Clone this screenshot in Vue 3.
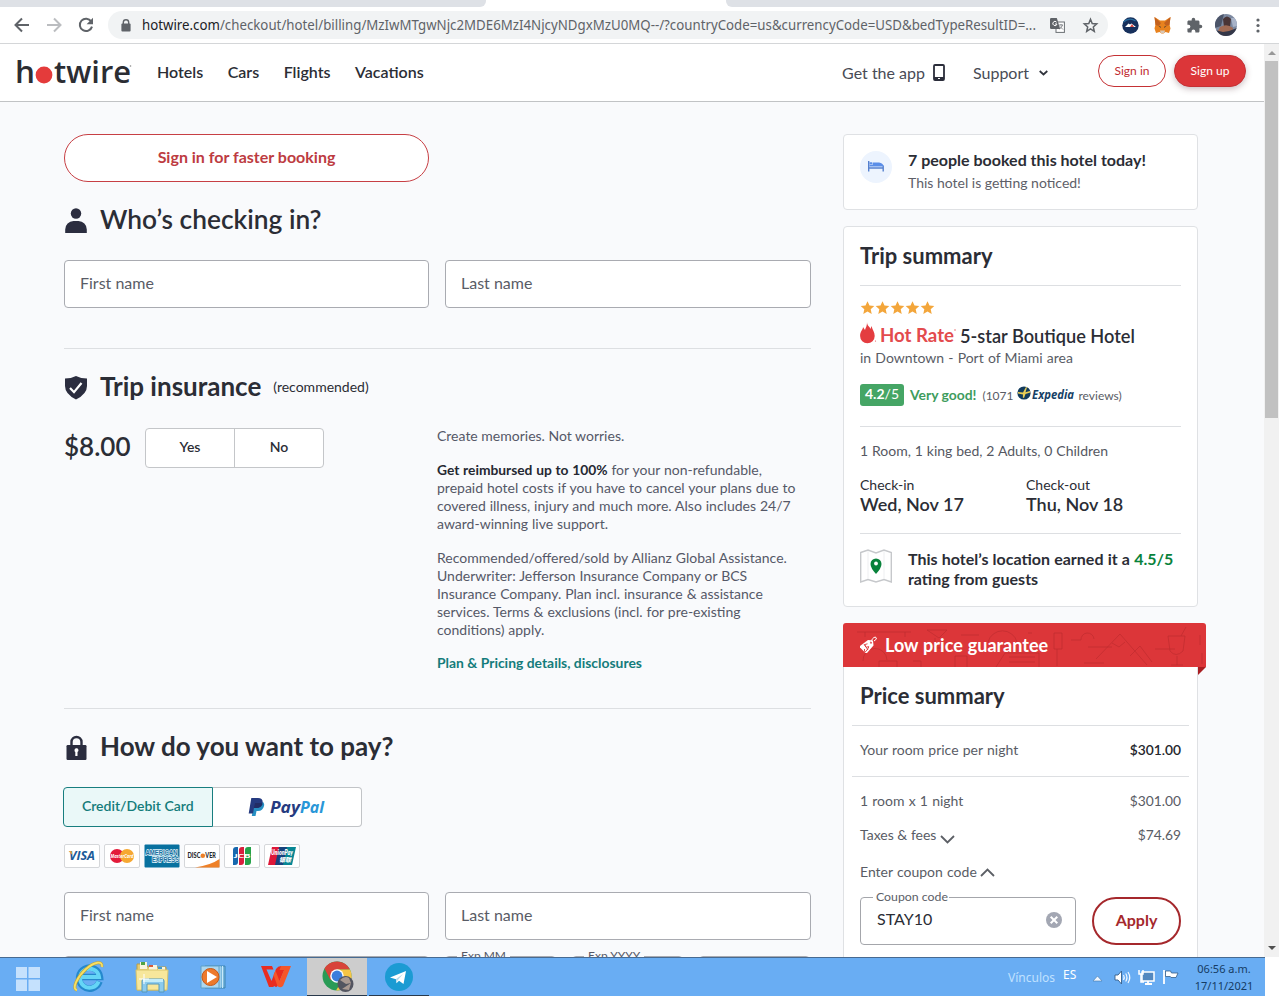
<script setup>
import { ref } from 'vue'

const links = ['Hotels', 'Cars', 'Flights', 'Vacations']
const insurance = ref('')
const payment = ref('card')
const coupon = ref('STAY10')
</script>

<template>
    <div class="screen">
        <div class="tabstrip">
            <div class="tabs_left"></div>
            <div class="tabs_right"></div>
        </div>

        <div class="toolbar">
            <div class="nav_icons">
                <svg width="16" height="16" viewBox="0 0 16 16" fill="none" stroke="#5f6368" stroke-width="2"><path d="M15 8H2M8 1.5 1.5 8 8 14.5" /></svg>
                <svg width="16" height="16" viewBox="0 0 16 16" fill="none" stroke="#bbbdc0" stroke-width="2"><path d="M1 8h13M8 1.5 14.5 8 8 14.5" /></svg>
                <svg width="16" height="16" viewBox="0 0 16 16" fill="none" stroke="#5f6368" stroke-width="2"><path d="M13.2 4.4A6.2 6.2 0 1 0 14 9.6" /><path d="M15 .8v6.4H8.6z" fill="#5f6368" stroke="none" /></svg>
            </div>
            <div class="omnibox">
                <svg class="lock" width="10" height="13" viewBox="0 0 10 13"><path d="M2.3 5V3.4a2.7 2.7 0 0 1 5.4 0V5" fill="none" stroke="#5f6368" stroke-width="1.4" /><rect x="0.4" y="4.6" width="9.2" height="8" rx="1" fill="#5f6368" /></svg>
                <div class="url">
                    <svg width="896" height="22"><text x="0" y="16" textLength="894" lengthAdjust="spacingAndGlyphs" fill="#5f6368"><tspan fill="#202124">hotwire.com</tspan>/checkout/hotel/billing/MzIwMTgwNjc2MDE6MzI4NjcyNDgxMzU0MQ--/?countryCode=us&amp;currencyCode=USD&amp;bedTypeResultID=...</text></svg>
                </div>
                <svg width="15" height="15" viewBox="0 0 15 15"><rect x="6" y="4" width="8.4" height="10.4" fill="#fff" stroke="#6b6f73" /><path d="M0 1.2Q0 0 1.2 0h5.6l3.4 11H1.2Q0 11 0 9.800z" fill="#5f6368" /><path d="M6.600 4.200A2.100 2.100 0 1 0 7 6H5" fill="none" stroke="#fff" stroke-width="1" /><path d="M9 7h4M11 6v1M12.500 7q-.7 2.500-3 4M10 8.500l3 3" fill="none" stroke="#6b6f73" stroke-width=".8" /></svg>
                <svg class="star" width="15" height="15" viewBox="0 0 15 15"><path d="M7.500 1.300l1.700 4.200 4.500.4-3.400 3 1 4.400-3.800-2.400-3.800 2.400 1-4.400-3.400-3 4.500-.4z" fill="none" stroke="#5f6368" stroke-width="1.500" /></svg>
            </div>
            <div class="extensions">
                <svg width="17" height="17" viewBox="0 0 17 17"><circle cx="8.500" cy="8.500" r="8.200" fill="#17305c" /><path d="M1.500 5q6-5 12-1" stroke="#286c9d" stroke-width="1.200" fill="none" /><path d="M3 10 6.500 6.500l1.500 1 1.500-1L14 10z" fill="#fff" /><path d="M8 10l2-3 2 3z" fill="#d84b43" /></svg>
                <svg width="17" height="17" viewBox="0 0 17 17"><path d="M.5 0 6 3.500h5L16.500 0l-1 7.500 1 4-1.500 4.500-3.500-1-2 1.500h-2l-2-1.500L2 16 .5 11.500l1-4z" fill="#e8821e" /><path d="M.5 0 7 6 5 9l-3.500-1zM16.500 0 10 6l2 3 3.500-1z" fill="#c3611e" /><path d="M6 13.500h5l-.7 2.500H6.700z" fill="#d8c7b6" /><path d="M4.500 9l2 .5.300 1.500zM12.500 9l-2 .5-.3 1.500z" fill="#333" /></svg>
                <svg width="17" height="17" viewBox="0 0 24 24"><path fill="#5f6368" d="M20.500 11H19V7c0-1.100-.9-2-2-2h-4V3.500a2.500 2.500 0 0 0-5 0V5H4c-1.100 0-2 .9-2 2v3.800h1.500a2.700 2.700 0 0 1 0 5.400H2V20c0 1.100.9 2 2 2h3.800v-1.500a2.700 2.700 0 0 1 5.400 0V22H17c1.100 0 2-.9 2-2v-4h1.500a2.500 2.500 0 0 0 0-5z" /></svg>
                <svg width="22" height="22" viewBox="0 0 22 22"><defs><clipPath id="face"><circle cx="11" cy="11" r="11" /></clipPath></defs><g clip-path="url(#face)"><rect width="22" height="22" fill="#7c89a0" /><path d="M0 0h9L6 12l-6 2z" fill="#4c5569" /><path d="M8 5q4-5 8 0l-1 8H9z" fill="#4a3536" /><path d="M5 13q7-4 13 1l-1 5-8 3-6-5z" fill="#a06b55" /><path d="M0 16l8 2 6-1 8-3v8H0z" fill="#343748" /><path d="M16 4h6v8l-4 1z" fill="#a8b3c8" /></g></svg>
                <svg class="menu" width="4" height="15" viewBox="0 0 4 15" fill="#5f6368"><circle cx="2" cy="2" r="1.600" /><circle cx="2" cy="7.500" r="1.600" /><circle cx="2" cy="13" r="1.600" /></svg>
            </div>
        </div>

        <div class="viewport">
            <div class="page">
                <header class="header">
                    <svg class="logo" width="116" height="34" viewBox="0 -3 116 34"><g font-family="Open Sans" font-weight="600" font-size="30" fill="#2b2d33"><text x="-1" y="25" textLength="20" lengthAdjust="spacingAndGlyphs">h</text><text x="38" y="25" textLength="77" lengthAdjust="spacingAndGlyphs">twire</text></g><circle cx="28" cy="17" r="8.400" fill="#e43b3b" /><circle cx="114.500" cy="8" r=".8" fill="#888" /></svg>
                    <nav class="links">
                        <a v-for="link in links" :key="link">{{ link }}</a>
                    </nav>
                    <div class="tools">
                        <span class="get_app">Get the app</span>
                        <svg width="12" height="17" viewBox="0 0 12 17"><rect x="1" y="1" width="10" height="15" rx="1" fill="#fff" stroke="#2b2d3a" stroke-width="1.800" /><path d="M1 13h10v3H1z" fill="#2b2d3a" /><path d="M5 14.500h2" stroke="#fff" /></svg>
                        <span class="support">Support</span>
                        <svg class="caret" width="9" height="6" viewBox="0 0 9 6"><path d="M.7 1l3.800 3.500L8.300 1" fill="none" stroke="#30333c" stroke-width="1.700" /></svg>
                        <button class="pill">Sign in</button>
                        <button class="pill filled">Sign up</button>
                    </div>
                </header>

                <div class="content">
                    <main class="main">
                        <button class="faster">Sign in for faster booking</button>
                        <h2 class="guest">
                            <svg width="24" height="26" viewBox="0 0 24 26" fill="#2b2d3f"><circle cx="12" cy="6.500" r="5.200" /><path d="M1.200 26v-3.500A8.500 8.500 0 0 1 9.500 14h5a8.500 8.500 0 0 1 8.300 8.500V26z" /></svg>
                            <span>Who’s checking in?</span>
                        </h2>
                        <div class="fields">
                            <div class="field">First name</div>
                            <div class="field">Last name</div>
                        </div>

                        <section class="insurance">
                            <h2>
                                <svg width="24" height="26" viewBox="0 0 24 26"><path d="M12 2q5 2.500 11 2.500V12q0 8-11 13.500Q1 20 1 12V4.500q6 0 11-2.500z" fill="#2b2d3f" /><path d="M6 14l4 4.200L17.500 9" fill="none" stroke="#fff" stroke-width="2.200" /></svg>
                                <span>Trip insurance</span>
                                <small>(recommended)</small>
                            </h2>
                            <div class="cover">
                                <div class="offer">
                                    <strong>$8.00</strong>
                                    <div class="choice">
                                        <button @click="insurance = 'yes'">Yes</button>
                                        <button @click="insurance = 'no'">No</button>
                                    </div>
                                </div>
                                <div class="terms">
                                    <p>Create memories. Not worries.</p>
                                    <p><b>Get reimbursed up to 100%</b> for your non-refundable,<br>prepaid hotel costs if you have to cancel your plans due to<br>covered illness, injury and much more. Also includes 24/7<br>award-winning live support.</p>
                                    <p>Recommended/offered/sold by Allianz Global Assistance.<br>Underwriter: Jefferson Insurance Company or BCS<br>Insurance Company. Plan incl. insurance &amp; assistance<br>services. Terms &amp; exclusions (incl. for pre-existing<br>conditions) apply.</p>
                                    <a>Plan &amp; Pricing details, disclosures</a>
                                </div>
                            </div>
                        </section>

                        <section class="payment">
                            <h2>
                                <svg width="24" height="26" viewBox="0 0 24 26"><path d="M7.500 12V8a5 5 0 0 1 10 0v4" fill="none" stroke="#2b2d3f" stroke-width="2.400" /><rect x="2.500" y="11" width="20" height="15" rx="1.200" fill="#2b2d3f" /><path d="M10.500 16.500a2 2 0 1 1 3 1.500v4h-2.200v-4q-.8-.5-.8-1.500z" fill="#fff" /></svg>
                                <span>How do you want to pay?</span>
                            </h2>
                            <div class="methods">
                                <button :class="{ active: payment === 'card' }" @click="payment = 'card'">Credit/Debit Card</button>
                                <button :class="{ active: payment === 'paypal' }" @click="payment = 'paypal'">
                                    <svg width="78" height="20" viewBox="0 0 78 20"><path d="M6.500 5H13q4-.5 3 4-1.200 5-6 5H8.500l-1 5H3.800z" fill="#2790c3" /><path d="M3.300 1H10q5.500.3 4.500 5-1.200 5-6.500 5H6l-1 5.500H.7z" fill="#253b80" /><path d="M7 6h5q2.800 0 2.400 1.200Q13 11 8.500 11H6z" fill="#222d65" /><g font-family="Open Sans" font-size="16" font-weight="700" font-style="italic"><text x="22" y="15.500" textLength="30" lengthAdjust="spacingAndGlyphs" fill="#253b80">Pay</text><text x="52" y="15.500" textLength="24" lengthAdjust="spacingAndGlyphs" fill="#2997d8">Pal</text></g></svg>
                                </button>
                            </div>
                            <div class="cards">
                                <svg width="36" height="24"><rect class="frame" x=".5" y=".5" width="35" height="23" rx="1.500" /><text x="5" y="16" font-family="Open Sans" font-size="12" font-weight="700" font-style="italic" fill="#1c5b99" textLength="26" lengthAdjust="spacingAndGlyphs">VISA</text><path d="M4.500 7h3L8.500 11z" fill="#e7a33e" /></svg>
                                <svg width="36" height="24"><rect class="frame" x=".5" y=".5" width="35" height="23" rx="1.500" /><circle cx="13" cy="12" r="7" fill="#e31b3a" /><circle cx="23" cy="12" r="7" fill="#f6a832" /><text x="6.500" y="13.800" font-family="Open Sans" font-size="5" font-weight="700" font-style="italic" fill="#fff" textLength="23" lengthAdjust="spacingAndGlyphs">MasterCard</text></svg>
                                <svg width="36" height="24"><rect x=".5" y=".5" width="35" height="23" rx="1" fill="#08719f" /><g font-family="Liberation Sans" font-size="7.500" font-weight="700" fill="#176f9f" stroke="#e6f6fc" stroke-width="1.300" paint-order="stroke"><text x="1.500" y="10.500" textLength="32" lengthAdjust="spacingAndGlyphs">AMERICAN</text><text x="8" y="18" textLength="27" lengthAdjust="spacingAndGlyphs">EXPRESS</text></g></svg>
                                <svg width="36" height="24"><rect class="frame" x=".5" y=".5" width="35" height="23" rx="1.500" /><path d="M11 23.500Q27 21 35.500 15v8.500z" fill="#ee8027" /><g font-family="Lato" font-size="6.500" font-weight="900" fill="#24272b"><text x="3.500" y="14" textLength="13" lengthAdjust="spacingAndGlyphs">DISC</text><circle cx="18.800" cy="11.800" r="2.300" fill="#ee8027" /><text x="21.300" y="14" textLength="10.500" lengthAdjust="spacingAndGlyphs">VER</text></g></svg>
                                <svg width="36" height="24"><rect class="frame" x=".5" y=".5" width="35" height="23" rx="1.500" /><path d="M9 6q0-3 3-3h2v15q0 3-3 3H9z" fill="#1768ae" /><path d="M15 6q0-3 3-3h2v15q0 3-3 3h-2z" fill="#d91f3e" /><path d="M21 6q0-3 3-3h3v15q0 3-3 3h-3z" fill="#26a34a" /><text x="9.500" y="14" font-family="Lato" font-size="6" font-weight="900" fill="#fff" textLength="17" lengthAdjust="spacingAndGlyphs">JCB</text></svg>
                                <svg width="36" height="24"><rect class="frame" x=".5" y=".5" width="35" height="23" rx="1.500" /><path d="M8 3h8l-4 18H4z" fill="#dd1739" /><path d="M15 3h9l-4 18h-9z" fill="#17427c" /><path d="M23 3h9l-4 18h-9z" fill="#078694" /><g fill="#fff" font-weight="800" font-style="italic"><text x="7" y="10.500" font-family="Lato" font-size="6.500" textLength="22" lengthAdjust="spacingAndGlyphs">UnionPay</text><text x="15" y="17.500" font-family="Noto Sans CJK SC" font-size="6" textLength="12" lengthAdjust="spacingAndGlyphs">银联</text></g></svg>
                            </div>
                            <div class="fields">
                                <div class="field">First name</div>
                                <div class="field">Last name</div>
                            </div>
                            <div class="expiry">
                                <fieldset class="number"></fieldset>
                                <fieldset><legend>Exp MM</legend></fieldset>
                                <fieldset><legend>Exp YYYY</legend></fieldset>
                                <fieldset></fieldset>
                            </div>
                        </section>
                    </main>

                    <aside class="side">
                        <div class="card notice">
                            <span class="bed">
                                <svg width="18" height="12" viewBox="0 0 18 12"><path d="M1.700 0v10.500M1.500 7h15M16.200 4.500v6" fill="none" stroke="#5580ce" stroke-width="1.400" /><path d="M2.500 3.500V1.300H5v2.200zM5.500 4V1.500H12q4 .5 4.500 3.500v.5H2.500V4z" fill="#5b8ee8" /></svg>
                            </span>
                            <div>
                                <h4>7 people booked this hotel today!</h4>
                                <p>This hotel is getting noticed!</p>
                            </div>
                        </div>

                        <div class="card trip">
                            <h3>Trip summary</h3>
                            <div class="hotel">
                                <div class="stars">
                                    <svg v-for="n in 5" :key="n" width="15" height="14" viewBox="0 0 15 14"><path d="M7.500.3l2 4.200 4.800.5-3.600 3.200 1 4.900-4.200-2.500-4.200 2.500 1-4.900L.7 5l4.800-.5z" fill="#f3a63b" /></svg>
                                </div>
                                <div class="rate">
                                    <svg width="96" height="26" viewBox="0 -1 96 26"><path d="M7 0c0 4 2.500 4 3.500 7l1-3c1 4 3.200 6 3.200 10a7.300 7.300 0 0 1-14.600 0C.1 9 3 8 3 5l2 3c1-3 2-4 2-8z" fill="#e43d40" /><text x="20" y="20" font-family="Lato" font-size="19" font-weight="700" fill="#e34b4d" textLength="74" lengthAdjust="spacingAndGlyphs">Hot Rate</text><circle cx="95" cy="8" r=".7" fill="#e34b4d" /><circle cx="15.500" cy="19" r=".6" fill="#e34b4d" /></svg>
                                    <span>5-star Boutique Hotel</span>
                                </div>
                                <p class="area">in Downtown - Port of Miami area</p>
                                <div class="score">
                                    <span class="badge"><b>4.2</b>/5</span>
                                    <b class="verdict">Very good!</b>
                                    <span class="count">(1071</span>
                                    <svg width="58" height="20" viewBox="0 -1 58 20"><circle cx="7" cy="7" r="6.600" fill="#123b5d" /><path d="M1 6l5 .5L9 1l1 .3-1.500 5L13 5l.3 1.500L8.500 8 7 12l-1.200-.5.2-3L1 7.500z" fill="#e9cd55" /><text x="15" y="13" font-family="Open Sans" font-style="italic" font-size="12.500" font-weight="700" fill="#163f66" textLength="42" lengthAdjust="spacingAndGlyphs">Expedia</text></svg>
                                    <span class="reviews">reviews)</span>
                                </div>
                            </div>
                            <div class="stay">
                                <p>1 Room, 1 king bed, 2 Adults, 0 Children</p>
                                <div class="dates">
                                    <div><span>Check-in</span><b>Wed, Nov 17</b></div>
                                    <div><span>Check-out</span><b>Thu, Nov 18</b></div>
                                </div>
                            </div>
                            <div class="location">
                                <svg width="32" height="34" viewBox="0 0 32 34"><path d="M.7 3.500 8 1l8 3 8-3 7.300 2.500V33L24 30.500 16 33l-8-2.500L.7 33z" fill="#fff" stroke="#c6c8cb" stroke-width="1.400" /><path d="M8 2v28M24 2v28" stroke="#eeeff1" /><path d="M16 25q-5.500-6-5.500-10a5.500 5.500 0 0 1 11 0q0 4-5.500 10z" fill="#08823b" /><circle cx="16" cy="14.500" r="1.900" fill="#fff" /></svg>
                                <h4>This hotel’s location earned it a <em>4.5/5</em><br>rating from guests</h4>
                            </div>
                        </div>

                        <div class="ribbon">
                            <svg class="doodles" width="363" height="44" viewBox="0 0 363 44" fill="none" stroke="#bd2b2e" stroke-width="1" opacity=".65"><path d="M14 9h54M22 9v5M62 9v5M20 38a12 12 0 0 1 24-1M36 44v-6h18v6M84 7h20l-8 8-12-8M92 15v10M89 25h10M70 38h8v6M112 44V33h12v11M145 19a15 15 0 0 1 29 0M153 44l9-14h34v14M166 34h26M166 39h26M211 10h8v16h-8zM214 26v17M228 17h10a6 6 0 0 1 13-1M245 24h24M253 36l24-25 27 31M269 20l7 4 6-5M287 33l10-10 12 16M312 26h20M325 13h17l-2 15q-7 7-13 0zM334 33v9M328 42h12M338 13l5-9M357 12v10M359 30v11M118 12h18M185 10h4M241 40h20" /></svg>
                            <svg class="tag" width="19" height="18" viewBox="0 0 19 18"><path d="M1 10 9 4l5 .5.5 5L8 17H6.500L1 11.500z" fill="#fff" /><circle cx="12" cy="6.600" r="1.100" fill="#dc3639" /><path d="M12 6.500q1-5 4.500-5.500l1 2-2.500 2" fill="none" stroke="#fff" /><path d="M8.500 7.800Q5 8 6 10t3 .8-1 3.200-2.500-1M5 8l4 6" fill="none" stroke="#dc3639" stroke-width=".9" /></svg>
                            <span>Low price guarantee</span>
                        </div>
                        <div class="card price">
                            <h3>Price summary</h3>
                            <div class="line first"><span>Your room price per night</span><b>$301.00</b></div>
                            <div class="line rooms"><span>1 room x 1 night</span><span>$301.00</span></div>
                            <div class="line taxes">
                                <span>Taxes &amp; fees <svg width="15" height="9" viewBox="0 0 15 9"><path d="M1 1l6.500 6.500L14 1" /></svg></span>
                                <span>$74.69</span>
                            </div>
                            <div class="line enter">
                                <span>Enter coupon code<svg width="15" height="9" viewBox="0 0 15 9"><path d="M1 8l6.500-6.500L14 8" /></svg></span>
                            </div>
                            <div class="coupon">
                                <fieldset>
                                    <legend>Coupon code</legend>
                                    <div class="value">
                                        <span>{{ coupon }}</span>
                                        <svg width="16" height="16" viewBox="0 0 16 16" @click="coupon = ''"><circle cx="8" cy="8" r="8" fill="#a3a7b3" /><path d="M4.700 4.700l6.600 6.600M11.300 4.700l-6.600 6.600" stroke="#fff" stroke-width="2" /></svg>
                                    </div>
                                </fieldset>
                                <button>Apply</button>
                            </div>
                        </div>
                    </aside>
                </div>
            </div>
            <div class="scrollbar">
                <i class="up"></i>
                <div class="thumb"></div>
                <i class="down"></i>
            </div>
        </div>

        <div class="taskbar">
            <div class="apps">
                <span class="app start">
                    <svg width="24" height="24" viewBox="0 0 24 24" fill="#c5e1fd"><path d="M0 0h11v11H0zM12.500 0H24v11H12.500zM0 12.500h11V24H0zM12.500 12.500H24V24H12.500z" /></svg>
                </span>
                <span class="app">
                    <svg width="32" height="32" viewBox="0 0 32 32"><path d="M26.500 20.500A10.500 10.500 0 1 1 27 16H9" fill="none" stroke="#2589cd" stroke-width="6.500" /><path d="M25.500 20.500A9.500 9.500 0 1 1 26 16H9" fill="none" stroke="#65d5f6" stroke-width="4" /><path d="M4 29C-2 28 5 15 13 8S30-1 29 6" fill="none" stroke="#c4a431" stroke-width="3" /><path d="M4 29C-2 28 5 15 13 8S30-1 29 6" fill="none" stroke="#f5df65" stroke-width="1.800" /></svg>
                </span>
                <span class="app">
                    <svg width="34" height="32" viewBox="0 0 34 32"><path d="M2 3h9l2 3h18v23H2z" fill="#e5cc72" stroke="#b89d49" /><path d="M5 1h7v7H5zM14 4h8v5h-8zM23 6h7v4h-7z" fill="#f8f5df" /><path d="M6 1h4v3H6z" fill="#52a343" /><path d="M14 4h4v2h-4z" fill="#d65a3c" /><path d="M23 6h4v2h-4z" fill="#439bcb" /><path d="M1 9h32l-1 20H2z" fill="#f7e79b" stroke="#d9c66d" /><path d="M7 31V20q0-2 2-2h18q2 0 2 2v11h-5v-8H12v8z" fill="#8bcbed" stroke="#5598bb" /><path d="M8 18h20v3H8z" fill="#c4edf9" /><path d="M9 13v10M4 18h10" stroke="#fff" /></svg>
                </span>
                <span class="app">
                    <svg width="28" height="26" viewBox="0 0 28 26"><path d="M5 2h20v22H5z" fill="#79b7dc" stroke="#3d85b2" /><path d="M20 2v22M22.500 2v22" stroke="#c8eafa" /><path d="M1 2h18v22H1z" fill="#add7ef" stroke="#5fa0c8" /><circle cx="10.500" cy="13" r="8.500" fill="#ed792b" stroke="#c55a19" /><path d="M7 7l10 6-10 6z" fill="#fff" /></svg>
                </span>
                <span class="app">
                    <svg width="30" height="22" viewBox="0 0 30 22"><path d="M0 0h11l1.500 3.500H5.500l5 11.500L15 3q2-3 5-3h5l-8.500 20q-1.500 2-3 0L12 21H8z" fill="#e92c20" /><path d="M20 0h10l-8 20q-3 2.500-5.500 0L12.500 9l2-4.500 4 10.500L23 4h-4.500z" fill="#f5562a" /></svg>
                </span>
                <span class="app active">
                    <svg width="32" height="32" viewBox="0 0 32 32"><circle cx="15" cy="15" r="14.500" fill="#299b56" /><path d="M2.500 7.500A14.500 14.500 0 0 1 28 8.500H15L8.500 19z" fill="#d84339" /><path d="M15 8.500h13A14.500 14.500 0 0 1 14 29.500L21 18z" fill="#f6c545" /><circle cx="15" cy="15" r="6.800" fill="#fff" /><circle cx="15" cy="15" r="5.400" fill="#3c7ddc" /><circle cx="23.500" cy="23" r="8" fill="#535560" /><path d="M18 19q5-5 9-2l2 5-5 1zM20 28l9-6-2 7z" fill="#a99991" /></svg>
                </span>
                <span class="app open">
                    <svg width="28" height="28" viewBox="0 0 28 28"><circle cx="14" cy="14" r="14" fill="#1b9bd3" /><path d="M5 14.500 21 8l-2.500 13-4.500-3.300-2.500 2.500-.5-4z" fill="#fff" /><path d="M11 16l7-5-5.500 6.500-1 2.700z" fill="#b6d8ea" /></svg>
                </span>
            </div>
            <div class="tray">
                <span class="vinculos">Vínculos</span>
                <span class="lang">ES</span>
                <svg class="more" width="9" height="5"><path d="M0 5l4.500-5L9 5z" fill="#eef6ff" stroke="#4778aa" stroke-width=".6" /></svg>
                <svg class="sound" width="17" height="15" viewBox="0 0 17 15"><path d="M1 5h3l3.500-4v13L4 10H1z" fill="#fff" stroke="#355e88" stroke-width=".9" /><path d="M9.500 5q1.500 2.500 0 5M11.700 3.500q2.500 4 0 8M14 2q3.500 5.500 0 11" fill="none" stroke="#f3f9ff" stroke-width="1.200" /></svg>
                <svg class="network" width="17" height="16" viewBox="0 0 17 16"><path d="M4 3h12v9H4z" fill="#5388bf" stroke="#fff" stroke-width="1.500" /><path d="M7 15h7M10 12v3" stroke="#fff" stroke-width="1.800" /><path d="M1 1v4h4V1M3 5v8h3" fill="none" stroke="#fff" stroke-width="1.500" /></svg>
                <svg class="flag" width="17" height="16" viewBox="0 0 17 16"><path d="M2 1v14" stroke="#fff" stroke-width="1.800" /><path d="M3.500 2h5l1 2H16l-2 4.500H9l-.7-1H3.500z" fill="#fff" stroke="#355e88" stroke-width=".8" /></svg>
                <div class="clock"><span>06:56 a.m.</span><span>17/11/2021</span></div>
            </div>
        </div>
    </div>
</template>

<style>
body {
    margin: 0;
    overflow: hidden;
}
</style>

<style scoped>
.screen {
    width: 1279px;
    height: 996px;
    overflow: hidden;
    display: flex;
    flex-direction: column;
    background: #fff;
    font-family: Lato, sans-serif;
    font-size: 14px;
    color: #2b2d35;
}

.screen * {
    box-sizing: border-box;
}

svg {
    display: block;
    flex: none;
    overflow: visible;
}

button {
    font-family: inherit;
    padding: 0;
    margin: 0;
}

h2, h3, h4, p {
    margin: 0;
}

/* browser */
.tabstrip {
    height: 7px;
    flex: none;
    display: flex;
    justify-content: space-between;
}

.tabs_left {
    width: 486px;
    background: #dee1e6;
    border-bottom-right-radius: 6px;
}

.tabs_right {
    width: 553px;
    background: #dee1e6;
    border-bottom-left-radius: 6px;
}

.toolbar {
    height: 37px;
    flex: none;
    display: flex;
    align-items: center;
    padding-left: 14px;
    border-bottom: 1px solid #d4d6d8;
}

.nav_icons {
    display: flex;
    gap: 16px;
    width: 94px;
}

.omnibox {
    width: 1000px;
    height: 28px;
    border-radius: 14px;
    background: #f1f3f4;
    display: flex;
    align-items: center;
    padding-left: 13px;
}

.url {
    width: 896px;
    margin: 0 12px 0 11px;
    font-family: "Noto Sans", sans-serif;
    font-size: 14px;
}

.star {
    margin-left: 18px;
}

.extensions {
    display: flex;
    align-items: center;
    gap: 15px;
    margin-left: 14px;
}

.extensions svg:nth-child(4) {
    margin-left: -3px;
}

.extensions .menu {
    margin-left: 4px;
}

.viewport {
    height: 913px;
    flex: none;
    display: flex;
}

.page {
    width: 1264px;
    height: 913px;
    overflow: hidden;
    background: #f9fafc;
}

.scrollbar {
    width: 15px;
    background: #f1f1f1;
    display: flex;
    flex-direction: column;
    align-items: center;
}

.scrollbar i {
    border: 4px solid transparent;
}

.scrollbar .up {
    border-bottom: 4px solid #989898;
    margin: 3px 0 6px;
}

.scrollbar .down {
    border-top: 4px solid #505050;
    margin: auto 0 3px;
}

.thumb {
    width: 13px;
    height: 357px;
    background: #c1c1c1;
}

/* site header */
.header {
    height: 58px;
    background: #fff;
    border-bottom: 1px solid #c1c3c5;
    display: flex;
    align-items: center;
    padding: 0 18px 0 16px;
}

.logo {
    margin-top: -1px;
}

.links {
    display: flex;
    gap: 24.5px;
    margin: -2px 0 0 25px;
    font-size: 16px;
    font-weight: 600;
}

.tools {
    display: flex;
    align-items: center;
    margin-left: auto;
    margin-top: -1px;
    font-size: 16px;
    color: #484b55;
}

.get_app {
    margin-right: 8px;
}

.support {
    margin: 0 10px 0 28px;
}

.caret {
    margin: 2px 50px 0 0;
}

.pill {
    width: 68px;
    height: 32px;
    margin-top: -2px;
    padding-bottom: 2px;
    border: 1px solid #c53135;
    border-radius: 16px;
    background: #fff;
    color: #bf2b30;
    font-size: 12px;
}

.filled {
    width: 72px;
    margin-left: 8px;
    background: #dc3639;
    color: #fff;
    box-shadow: 0 2px 6px rgba(80, 40, 50, 0.3);
}

.content {
    display: flex;
    gap: 32px;
    padding: 32px 0 0 64px;
}

.main {
    width: 747px;
}

.faster {
    display: block;
    width: 365px;
    height: 48px;
    padding-bottom: 3px;
    border: 1px solid #c73f44;
    border-radius: 24px;
    background: #fff;
    color: #bd3b41;
    font-size: 16px;
    font-weight: 700;
}

h2 {
    display: flex;
    align-items: center;
    height: 40px;
    font-size: 26px;
    font-weight: 700;
    line-height: 38px;
}

h2 span {
    margin-left: 12px;
    padding-bottom: 2px;
}

h2 small {
    margin-left: 12px;
    font-size: 14px;
    font-weight: 400;
}

.guest {
    margin: 18px 0 20px;
}

.guest span {
    font-weight: 600;
    font-size: 26.3px;
}

.fields {
    display: grid;
    grid-template-columns: 365px 366px;
    gap: 16px;
}

.field {
    height: 48px;
    border: 1px solid #a9abb1;
    border-radius: 4px;
    background: #fff;
    padding-left: 15px;
    font-size: 16px;
    line-height: 44px;
    color: #595c66;
}

.insurance {
    margin-top: 40px;
    padding-top: 18px;
    height: 360px;
    border-top: 1px solid #dddfe2;
}

.cover {
    display: flex;
    margin-top: 20px;
}

.offer {
    display: flex;
    width: 373px;
    padding-top: 1px;
}

.offer strong {
    width: 81px;
    font-size: 26px;
    font-weight: 600;
    line-height: 36px;
}

.choice {
    display: flex;
    width: 179px;
    height: 40px;
    border: 1px solid #c4c6c9;
    border-radius: 4px;
    background: #fff;
}

.choice button {
    flex: 1;
    padding-bottom: 3px;
    border: 0;
    background: none;
    color: #2b2d35;
    font-size: 14px;
    font-weight: 600;
}

.choice button + button {
    border-left: 1px solid #c4c6c9;
}

.terms {
    width: 374px;
    line-height: 18px;
    white-space: nowrap;
    color: #555867;
}

.terms p {
    margin-bottom: 16px;
}

.terms p + p {
    word-spacing: 0.35px;
}

.terms b {
    color: #252832;
    font-size: 13.8px;
}

.terms a {
    display: block;
    margin-top: -1px;
    color: #147c7b;
    font-size: 13.9px;
    font-weight: 700;
}

.payment {
    border-top: 1px solid #dddfe2;
    padding-top: 18px;
}

.methods {
    display: flex;
    width: 299px;
    height: 40px;
    margin: 20px 0 17px -1px;
}

.methods button {
    width: 150px;
    border: 1px solid #c2c4c7;
    border-left: 0;
    border-radius: 0 4px 4px 0;
    background: #fff;
    display: flex;
    align-items: center;
    justify-content: center;
    font-size: 14px;
    font-weight: 600;
}

.methods button.active {
    border: 1px solid #187e7f;
    border-radius: 4px 0 0 4px;
    padding-bottom: 3px;
    background: #eaf8f8;
    color: #147c7b;
}

.cards {
    display: flex;
    gap: 4px;
    margin-bottom: 24px;
}

.frame {
    fill: #fff;
    stroke: #d5d7da;
}

.expiry {
    display: grid;
    grid-template-columns: 365px 111px 111px 111px;
    gap: 16px;
    padding-top: 9px;
}

.expiry fieldset {
    height: 54px;
    min-width: 0;
    margin: 0;
    padding: 0 11px;
    border: 1px solid #a9abb1;
    border-radius: 4px;
    color: #555867;
    font-size: 12px;
}

.expiry fieldset:first-child,
.expiry fieldset:last-child {
    margin-top: 7px;
}

.expiry legend {
    line-height: 14px;
    padding: 0 4px;
}

/* right column */
.side {
    width: 355px;
}

.card {
    border: 1px solid #dfe1e4;
    border-radius: 4px;
    background: #fff;
    padding: 0 16px;
}

h4 {
    font-size: 16px;
    font-weight: 700;
    line-height: 20px;
    white-space: nowrap;
}

.notice {
    display: flex;
    gap: 16px;
    height: 76px;
    padding-top: 16px;
}

.notice h4 {
    margin-top: -1px;
}

.notice p {
    color: #5e6068;
    line-height: 26px;
}

.bed {
    width: 32px;
    height: 32px;
    border-radius: 50%;
    background: #edf4fe;
    display: flex;
    align-items: center;
    justify-content: center;
}

.trip {
    margin-top: 16px;
    height: 381px;
}

h3 {
    height: 58px;
    font-size: 22px;
    font-weight: 700;
    line-height: 57px;
}

.hotel {
    height: 141px;
    border-top: 1px solid #dddfe2;
    padding-top: 15px;
}

.stars {
    display: flex;
    height: 14px;
}

.rate {
    display: flex;
    align-items: center;
    gap: 4px;
    height: 25px;
    margin-top: 8px;
    font-size: 18.2px;
    font-weight: 600;
    white-space: nowrap;
}

.rate svg {
    margin-top: -4px;
}

.area {
    color: #595c65;
    line-height: 20px;
    word-spacing: 0.6px;
}

.score {
    display: flex;
    align-items: center;
    height: 22px;
    margin-top: 16px;
    color: #595c65;
    font-size: 12px;
}

.badge {
    width: 44px;
    height: 22px;
    border-radius: 3px;
    background: #45a565;
    color: #fff;
    text-align: center;
    font-size: 14px;
    line-height: 20px;
}

.verdict {
    margin: -2px 6px 0;
    color: #3e9c5d;
    font-size: 13.9px;
}

.score svg {
    margin: 0 4px 0 3px;
}

.stay {
    height: 107px;
    border-top: 1px solid #dddfe2;
    padding-top: 14px;
    color: #555862;
}

.stay p {
    line-height: 20px;
    word-spacing: 0.3px;
}

.dates {
    display: grid;
    grid-template-columns: 166px 1fr;
    margin-top: 14px;
    color: #2b2d35;
}

.dates span,
.dates b {
    display: block;
    line-height: 20px;
}

.dates b {
    margin-top: -1px;
    font-size: 18px;
    font-weight: 600;
}

.location {
    display: flex;
    gap: 16px;
    border-top: 1px solid #dddfe2;
    padding-top: 15px;
}

.location h4 {
    word-spacing: 0.3px;
}

.location em {
    color: #08823b;
    font-style: normal;
}

.ribbon {
    position: relative;
    display: flex;
    align-items: center;
    gap: 7px;
    width: 363px;
    height: 44px;
    margin-top: 16px;
    padding-left: 16px;
    border-radius: 3px 3px 0 0;
    background: #dc3639;
    color: #fff;
    font-size: 18px;
    font-weight: 700;
}

.doodles {
    position: absolute;
    inset: 0;
}

.tag,
.ribbon span {
    position: relative;
}

.ribbon span {
    padding-bottom: 1px;
    word-spacing: 0.6px;
}

.ribbon::after {
    content: '';
    position: absolute;
    right: 0;
    top: 44px;
    border-top: 8px solid #a91e22;
    border-right: 8px solid transparent;
}

.price {
    height: 400px;
    border-top: 0;
    border-radius: 0;
}

.line {
    display: flex;
    justify-content: space-between;
    color: #595c65;
    line-height: 20px;
    word-spacing: 0.6px;
}

.line > :last-child:not(:first-child) {
    font-size: 13.8px;
}

.line b {
    color: #25272e;
    font-weight: 600;
}

.first {
    margin: 0 -8px;
    padding: 14px 8px 16px;
    border: solid #dddfe2;
    border-width: 1px 0;
}

.rooms {
    padding-top: 14px;
}

.taxes {
    padding-top: 14px;
}

.taxes span {
    height: 20px;
    word-spacing: 0;
}

.enter {
    padding-top: 17px;
}

.line svg {
    display: inline-block;
    fill: none;
    stroke: #5c5f65;
    stroke-width: 1.8;
}

.taxes svg {
    vertical-align: -4px;
}

.enter svg {
    margin-left: 3px;
}

.coupon {
    display: flex;
    gap: 16px;
    margin-top: 8px;
}

.coupon fieldset {
    width: 216px;
    height: 55px;
    margin: 0;
    padding: 0 13px 0 16px;
    border: 1px solid #a4a6ab;
    border-radius: 4px;
}

.coupon legend {
    margin-left: -4px;
    padding: 0 1px 0 3px;
    color: #5b5e67;
    font-size: 12.3px;
    line-height: 14px;
}

.value {
    display: flex;
    align-items: center;
    justify-content: space-between;
    height: 31px;
    font-size: 16px;
}

.value span {
    padding-bottom: 2px;
}

.coupon button {
    width: 89px;
    height: 48px;
    margin-top: 7px;
    padding-bottom: 3px;
    border: 2px solid #a5282c;
    border-radius: 24px;
    background: #fff;
    color: #a5282c;
    font-size: 16px;
    font-weight: 700;
}

/* desktop taskbar */
.taskbar {
    width: 1265px;
    height: 39px;
    flex: none;
    display: flex;
    justify-content: space-between;
    background: #69adf3;
    border-top: 1px solid #476a91;
}

.apps {
    display: flex;
}

.app {
    width: 62px;
    height: 38px;
    display: flex;
    align-items: center;
    justify-content: center;
}

.start {
    width: 57px;
    padding: 3px 2px 0 0;
}

.app:nth-child(2) {
    width: 64px;
}

.app.active {
    width: 60px;
    padding-left: 2px;
    background: #cdcdcd;
    border-bottom: 1px solid #28394b;
}

.app.open {
    width: 60px;
    margin-left: 2px;
    border-bottom: 1px solid #28394b;
}

.tray {
    display: flex;
    align-items: center;
    width: 257px;
    font-family: "Noto Sans", sans-serif;
    font-size: 12px;
}

.vinculos {
    width: 55px;
    color: #c0e1ff;
}

.lang {
    margin-top: -6px;
    width: 30px;
    color: #fff;
}

.more {
    margin-top: 3px;
}

.sound {
    margin-left: 12px;
}

.network {
    margin-left: 7px;
}

.flag {
    margin-left: 7px;
}

.clock {
    display: flex;
    flex-direction: column;
    align-items: center;
    width: 60px;
    margin-left: 15px;
    color: #153c64;
    line-height: 17px;
    font-size: 11px;
}
</style>
